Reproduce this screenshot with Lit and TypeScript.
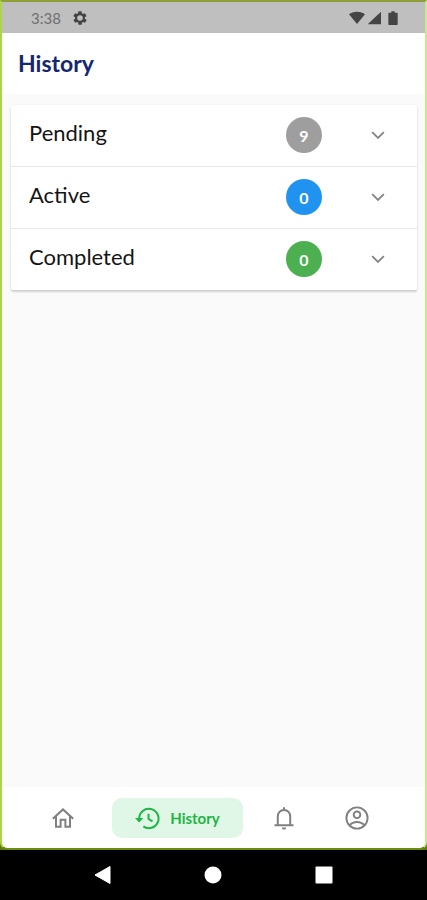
import { LitElement, html, css, svg } from "lit";
import { customElement, property, state } from "lit/decorators.js";

const icon = (name: string, size: number, body: unknown) => html`
  <svg class=${name} width=${size} height=${size} viewBox="0 0 24 24" aria-hidden="true">${body}</svg>
`;

const gear = svg`<path fill="currentColor" fill-rule="evenodd" d="M19.4 13a7.5 7.5 0 0 0 0-2l2.1-1.7a.5.5 0 0 0 .1-.6l-2-3.5a.5.5 0 0 0-.6-.2l-2.5 1a7.3 7.3 0 0 0-1.7-1l-.4-2.6a.5.5 0 0 0-.5-.4h-4a.5.5 0 0 0-.5.4L9.100 5a7.700 7.700 0 0 0-1.700 1l-2.500-1a.5.5 0 0 0-.6.2l-2 3.500a.5.5 0 0 0 .1.6L4.600 11a7.900 7.900 0 0 0 0 2l-2.100 1.700a.5.5 0 0 0-.1.6l2 3.500c.1.2.4.3.6.2l2.500-1c.5.4 1.100.7 1.700 1l.4 2.600c0 .2.2.4.5.4h4c.2 0 .5-.2.5-.4l.4-2.600c.6-.3 1.200-.6 1.700-1l2.500 1c.2.1.5 0 .6-.2l2-3.500a.5.5 0 0 0-.1-.6zM12 16.200a4.200 4.200 0 1 1 0-8.400 4.200 4.200 0 0 1 0 8.400z"/>`;
const chevron = svg`<path fill="none" stroke="currentColor" stroke-width="2.200" d="m5 8.500 7 7 7-7"/>`;
const home = svg`<path fill="none" stroke="currentColor" stroke-width="2" stroke-linejoin="miter" d="M1.800 12.800 12 3.400l10.200 9.400M5 10.500v10.300h4.600v-7h4.800v7H19V10.500"/>`;
const history = svg`<g fill="none" stroke="currentColor" stroke-width="1.900"><path d="M4 13.200V12a9.300 9.300 0 1 1 4 7.600"/><path d="M13 7.500v5l3.800 2.300"/></g><path fill="currentColor" d="M0 11.500h8l-4 4.300z"/>`;
const bell = svg`<path fill="none" stroke="currentColor" stroke-width="2" stroke-linejoin="round" d="M2.500 19.200h19M5.800 19v-8.500c0-3.500 2.400-6.500 6.200-6.500s6.200 3 6.200 6.500V19M12 1.200V4"/><path fill="currentColor" d="M9.800 21.400h4.400a2.200 2.200 0 0 1-4.400 0z"/>`;
const account = svg`<g fill="none" stroke="currentColor" stroke-width="1.900"><circle cx="12" cy="12" r="10.600"/><circle cx="12" cy="8.800" r="3.300"/><path d="M4.800 19.200c1.800-2.300 4.400-3.200 7.200-3.200s5.400.9 7.200 3.200"/></g>`;

@customElement("status-bar")
class StatusBar extends LitElement {
  static styles = css`
    :host {
      display: flex;
      align-items: center;
      height: 31px;
      padding: 0 24px 0 29px;
      background: #bfbfbf;
      color: #444;
      font-size: 15px;
    }
    .time { color: #707070; margin-right: 11px; }
    .signals { display: flex; align-items: center; gap: 2px; margin-left: auto; }
  `;
  render() {
    return html`
      <span class="time">3:38</span>
      ${icon("gear", 16, gear)}
      <div class="signals">
        ${icon("wifi", 16, svg`<path fill="currentColor" d="M0 6.500C3 3.800 7 2.500 12 2.500s9 1.300 12 4L12 21z"/>`)}
        ${icon("cell", 16, svg`<path fill="currentColor" d="M1 21.500 21 2.500v19z"/>`)}
        ${icon("battery", 16, svg`<path fill="currentColor" d="M9.500 2h5v2H18a1 1 0 0 1 1 1v16.500a1 1 0 0 1-1 1H6a1 1 0 0 1-1-1V5a1 1 0 0 1 1-1h3.500z"/>`)}
      </div>
    `;
  }
}

@customElement("history-row")
class HistoryRow extends LitElement {
  @property() label = "";
  @property({ type: Number }) count = 0;
  @property() tone = "grey";
  @state() open = false;

  static styles = css`
    :host { display: block; }
    .row {
      display: flex;
      align-items: center;
      width: 100%;
      height: 61px;
      padding: 0 29px 1px 18px;
      border: 0;
      background: #fff;
      color: #151515;
      font: inherit;
      font-size: 22px;
      text-align: left;
    }
    .label { flex: 1; line-height: 28px; padding-bottom: 4px; }
    .badge {
      display: grid;
      place-items: center;
      width: 36px;
      height: 36px;
      margin-right: 46px;
      border-radius: 50%;
      color: #fff;
      font-size: 16px;
      font-weight: 700;
    }
    .grey { background: #9e9e9e; }
    .blue { background: #2093f1; }
    .green { background: #4caf50; }
    .chevron { color: #858585; }
  `;
  render() {
    return html`
      <button class="row" aria-expanded=${this.open} @click=${() => (this.open = !this.open)}>
        <span class="label">${this.label}</span>
        <span class="badge ${this.tone}">${this.count}</span>
        ${icon("chevron", 20, chevron)}
      </button>
    `;
  }
}

@customElement("tab-bar")
class TabBar extends LitElement {
  static styles = css`
    :host { display: block; background: #fff; }
    .tabs {
      display: grid;
      grid-template-columns: 99fr 131fr 82fr 64fr;
      padding: 11px 36px 10px 11px;
    }
    .tab {
      display: flex;
      align-items: center;
      justify-content: center;
      gap: 10px;
      height: 40px;
      padding: 0;
      border: 0;
      border-radius: 10px;
      background: none;
      color: #808080;
      font: inherit;
      font-size: 15px;
      font-weight: 700;
    }
    .active { background: #e0f6e6; color: #1fb545; }
  `;
  render() {
    return html`
      <nav class="tabs">
        <button class="tab" aria-label="Home">${icon("home", 24, home)}</button>
        <button class="tab active" aria-current="page">${icon("history", 25, history)}<span>History</span></button>
        <button class="tab" aria-label="Notifications">${icon("bell", 24, bell)}</button>
        <button class="tab" aria-label="Account">${icon("account", 24, account)}</button>
      </nav>
    `;
  }
}

@customElement("system-bar")
class SystemBar extends LitElement {
  static styles = css`
    :host { display: block; background: #000; }
    .keys {
      display: grid;
      grid-template-columns: repeat(3, 1fr);
      height: 50px;
      padding: 0 48px;
    }
    .key {
      display: grid;
      place-items: center;
      padding: 0;
      border: 0;
      background: none;
      color: #fff;
    }
  `;
  render() {
    return html`
      <div class="keys">
        <button class="key" aria-label="Back">${icon("back", 24, svg`<path fill="currentColor" stroke="currentColor" stroke-linejoin="round" d="M4 12 19 3.500v17z"/>`)}</button>
        <button class="key" aria-label="Home">${icon("circle", 24, svg`<circle fill="currentColor" cx="12" cy="12" r="8.500"/>`)}</button>
        <button class="key" aria-label="Recent apps">${icon("square", 24, svg`<rect fill="currentColor" x="3.500" y="3.500" width="17" height="17" rx="1"/>`)}</button>
      </div>
    `;
  }
}

@customElement("app-root")
class AppRoot extends LitElement {
  static styles = css`
    :host {
      display: flex;
      flex-direction: column;
      min-height: 100vh;
      background: #5f7a10;
      font-family: Lato, "Open Sans", sans-serif;
    }
    .screen {
      flex: 1;
      display: flex;
      flex-direction: column;
      border: 2px solid #acd648;
      border-top-color: #8ea035;
      border-bottom-color: #6f8c10;
      border-right-color: #c9e892;
      border-radius: 0 0 8px 8px;
      background: #fafafa;
      overflow: hidden;
    }
    .header { padding: 14px 16px 15px; background: #fff; }
    .title {
      margin: 0;
      color: #14276f;
      font-size: 23px;
      line-height: 32px;
      font-weight: 700;
    }
    .content { flex: 1; padding: 11px 8px 0 9px; }
    .card {
      display: grid;
      gap: 1px;
      border-radius: 2px;
      background: #e8e8e8;
      box-shadow: 0 2px 2px #00000028, 0 0 3px #0000000c;
      overflow: hidden;
    }
  `;
  render() {
    return html`
      <div class="screen">
        <status-bar></status-bar>
        <header class="header"><h1 class="title">History</h1></header>
        <main class="content">
          <div class="card">
            <history-row label="Pending" count="9" tone="grey"></history-row>
            <history-row label="Active" count="0" tone="blue"></history-row>
            <history-row label="Completed" count="0" tone="green"></history-row>
          </div>
        </main>
        <tab-bar></tab-bar>
      </div>
      <system-bar></system-bar>
    `;
  }
}
